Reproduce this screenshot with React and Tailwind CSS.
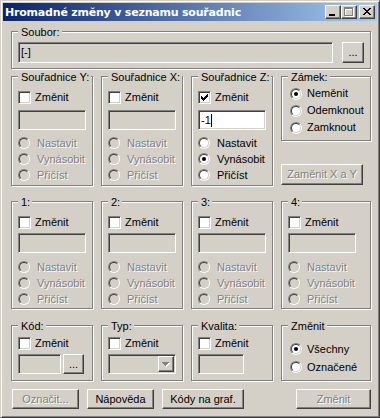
import React from "react";

const font = "font-['Liberation_Sans',Arial,sans-serif] text-[11px] leading-[13px]";
const sunken =
  "border border-t-[#808080] border-l-[#808080] border-r-white border-b-white shadow-[inset_1px_1px_0_#404040,inset_-1px_-1px_0_#d4d0c8]";
const raised =
  "border border-t-white border-l-white border-r-[#404040] border-b-[#404040] shadow-[inset_-1px_-1px_0_#808080] bg-[#d4d0c8]";
const dis = "text-[#808080] [text-shadow:1px_1px_0_#fff]";

function Group({ label, className = "", children }) {
  return (
    <div
      className={`relative border border-[#808080] shadow-[inset_1px_1px_0_#fff,1px_1px_0_#fff] ${className}`}
    >
      <span className="absolute left-[6px] -top-[6px] bg-[#d4d0c8] pl-[3px] pr-[2px] whitespace-nowrap">
        {label}
      </span>
      {children}
    </div>
  );
}

function Checkbox({ checked }) {
  return (
    <div className={`w-[13px] h-[13px] shrink-0 bg-white ${sunken} flex items-center justify-center`}>
      {checked && (
        <svg width="7" height="7" shapeRendering="crispEdges">
          <rect x="0" y="2" width="1" height="3" fill="#000" />
          <rect x="1" y="3" width="1" height="3" fill="#000" />
          <rect x="2" y="4" width="1" height="3" fill="#000" />
          <rect x="3" y="3" width="1" height="3" fill="#000" />
          <rect x="4" y="2" width="1" height="3" fill="#000" />
          <rect x="5" y="1" width="1" height="3" fill="#000" />
          <rect x="6" y="0" width="1" height="3" fill="#000" />
        </svg>
      )}
    </div>
  );
}

function Radio({ checked, disabled }) {
  return (
    <div className="w-[12px] h-[12px] shrink-0 rounded-full border border-t-[#808080] border-l-[#808080] border-b-white border-r-white">
      <div
        className={`w-full h-full rounded-full border border-t-[#404040] border-l-[#404040] border-b-[#d4d0c8] border-r-[#d4d0c8] flex items-center justify-center ${
          disabled ? "bg-[#d4d0c8]" : "bg-white"
        }`}
      >
        {checked && <div className="w-[4px] h-[4px] rounded-full bg-black" />}
      </div>
    </div>
  );
}

function CheckRow({ checked }) {
  return (
    <div className="flex items-center gap-[4px] h-[13px]">
      <Checkbox checked={checked} />
      <span>Změnit</span>
    </div>
  );
}

function Button({ children, disabled, className = "" }) {
  return (
    <div className={`${raised} flex items-center justify-center ${className}`}>
      <span className={disabled ? dis : "text-black"}>{children}</span>
    </div>
  );
}

function CoordGroup({ label, enabled, checked, value, selected, fieldMt, radioMt, className }) {
  const opts = ["Nastavit", "Vynásobit", "Přičíst"];
  return (
    <Group label={label} className={className}>
      <div className="flex flex-col pl-[6px] pt-[14px]">
        <CheckRow checked={checked} />
        <div
          className={`w-[68px] h-[20px] ${sunken} ${enabled ? "bg-white" : "bg-[#d4d0c8]"} flex items-center pl-[2px] ${fieldMt}`}
        >
          {value && (
            <>
              <span>{value}</span>
              <span className="w-[1px] h-[13px] bg-black" />
            </>
          )}
        </div>
        <div className={`flex flex-col ${radioMt}`}>
          {opts.map((o) => (
            <div key={o} className="flex items-center gap-[7px] h-[16px]">
              <Radio disabled={!enabled} checked={selected === o} />
              <span className={enabled ? "text-black" : dis}>{o}</span>
            </div>
          ))}
        </div>
      </div>
    </Group>
  );
}

function CaptionButton({ children }) {
  return (
    <div className={`w-[16px] h-[14px] ${raised} flex`}>
      <svg width="14" height="12" shapeRendering="crispEdges">
        {children}
      </svg>
    </div>
  );
}

export default function App() {
  return (
    <div
      className={`w-[380px] h-[418px] bg-[#d4d0c8] border border-t-[#d4d0c8] border-l-[#d4d0c8] border-r-[#404040] border-b-[#404040] shadow-[inset_1px_1px_0_#fff,inset_-1px_-1px_0_#808080] p-[2px] flex flex-col ${font} text-black`}
    >
      {/* Title bar */}
      <div className="h-[18px] shrink-0 flex items-center justify-between bg-[linear-gradient(to_right,#0a246a,#a6caf0)] pl-[2px] pr-[2px]">
        <span className="text-white font-bold whitespace-nowrap font-['DejaVu_Sans',sans-serif] text-[11px] tracking-[-0.2px]">
          Hromadné změny v seznamu souřadnic
        </span>
        <div className="flex items-center">
          <CaptionButton>
            <rect x="3" y="8" width="6" height="2" fill="#000" />
          </CaptionButton>
          <CaptionButton>
            <g fill="#fff">
              <rect x="3" y="2" width="9" height="2" />
              <rect x="3" y="2" width="1" height="9" />
              <rect x="11" y="2" width="1" height="9" />
              <rect x="3" y="10" width="9" height="1" />
            </g>
            <g fill="#808080">
              <rect x="2" y="1" width="9" height="2" />
              <rect x="2" y="1" width="1" height="9" />
              <rect x="10" y="1" width="1" height="9" />
              <rect x="2" y="9" width="9" height="1" />
            </g>
          </CaptionButton>
          <div className="w-[2px]" />
          <CaptionButton>
            <g fill="#000">
              <rect x="3" y="2" width="2" height="1" />
              <rect x="9" y="2" width="2" height="1" />
              <rect x="4" y="3" width="2" height="1" />
              <rect x="8" y="3" width="2" height="1" />
              <rect x="5" y="4" width="4" height="1" />
              <rect x="6" y="5" width="2" height="1" />
              <rect x="5" y="6" width="4" height="1" />
              <rect x="4" y="7" width="2" height="1" />
              <rect x="8" y="7" width="2" height="1" />
              <rect x="3" y="8" width="2" height="1" />
              <rect x="9" y="8" width="2" height="1" />
            </g>
          </CaptionButton>
        </div>
      </div>

      {/* Body */}
      <div className="pl-[8px] w-[368px] flex flex-col">
        {/* Soubor */}
        <Group label="Soubor:" className="mt-[10px] h-[38px] w-[360px]">
          <div className="flex pl-[6px] pt-[10px]">
            <div className={`w-[315px] h-[21px] ${sunken} bg-[#d4d0c8] flex items-center pl-[2px]`}>
              <span>[-]</span>
            </div>
            <Button className="ml-[9px] w-[22px] h-[21px]">...</Button>
          </div>
        </Group>

        {/* Row 1 */}
        <div className="mt-[7px] grid grid-cols-[82px_82px_82px_90px] gap-x-[8px] h-[110px]">
          <CoordGroup label="Souřadnice Y:" fieldMt="mt-[6px]" radioMt="mt-[5px]" />
          <CoordGroup label="Souřadnice X:" fieldMt="mt-[6px]" radioMt="mt-[5px]" />
          <CoordGroup
            label="Souřadnice Z:"
            enabled
            checked
            value="-1"
            selected="Vynásobit"
            fieldMt="mt-[6px]"
            radioMt="mt-[5px]"
          />
          <div className="flex flex-col">
            <Group label="Zámek:" className="h-[65px]">
              <div className="flex flex-col pl-[8px] pt-[8px]">
                {["Neměnit", "Odemknout", "Zamknout"].map((o, i) => (
                  <div key={o} className="flex items-center gap-[5px] h-[17px]">
                    <Radio checked={i === 0} />
                    <span>{o}</span>
                  </div>
                ))}
              </div>
            </Group>
            <Button disabled className="mt-auto mb-[1px] w-[82px] h-[21px]">
              Zaměnit X a Y
            </Button>
          </div>
        </div>

        {/* Row 2 */}
        <div className="mt-[15px] grid grid-cols-[82px_82px_82px_90px] gap-x-[8px] h-[108px]">
          <CoordGroup label="1:" fieldMt="mt-[4px]" radioMt="mt-[6px]" />
          <CoordGroup label="2:" fieldMt="mt-[4px]" radioMt="mt-[6px]" />
          <CoordGroup label="3:" fieldMt="mt-[4px]" radioMt="mt-[6px]" />
          <CoordGroup label="4:" fieldMt="mt-[4px]" radioMt="mt-[6px]" />
        </div>

        {/* Row 3 */}
        <div className="mt-[16px] grid grid-cols-[82px_82px_82px_90px] gap-x-[8px] h-[56px]">
          <Group label="Kód:">
            <div className="flex flex-col pl-[6px] pt-[11px]">
              <CheckRow />
              <div className="flex mt-[4px]">
                <div className={`w-[43px] h-[20px] ${sunken} bg-[#d4d0c8]`} />
                <Button className="ml-[2px] w-[21px] h-[20px]">...</Button>
              </div>
            </div>
          </Group>
          <Group label="Typ:">
            <div className="flex flex-col pl-[6px] pt-[11px]">
              <CheckRow />
              <div className={`mt-[4px] w-[68px] h-[20px] ${sunken} bg-[#d4d0c8] flex justify-end p-[1px]`}>
                <div className={`w-[16px] h-full ${raised} flex items-center justify-center`}>
                  <svg width="8" height="5" shapeRendering="crispEdges">
                    <g fill="#fff">
                      <rect x="1" y="1" width="7" height="1" />
                      <rect x="2" y="2" width="5" height="1" />
                      <rect x="3" y="3" width="3" height="1" />
                      <rect x="4" y="4" width="1" height="1" />
                    </g>
                    <g fill="#808080">
                      <rect x="0" y="0" width="7" height="1" />
                      <rect x="1" y="1" width="5" height="1" />
                      <rect x="2" y="2" width="3" height="1" />
                      <rect x="3" y="3" width="1" height="1" />
                    </g>
                  </svg>
                </div>
              </div>
            </div>
          </Group>
          <Group label="Kvalita:">
            <div className="flex flex-col pl-[6px] pt-[11px]">
              <CheckRow />
              <div className={`mt-[4px] w-[46px] h-[20px] ${sunken} bg-[#d4d0c8]`} />
            </div>
          </Group>
          <Group label="Změnit">
            <div className="flex flex-col pl-[8px] pt-[14px]">
              {["Všechny", "Označené"].map((o, i) => (
                <div key={o} className="flex items-center gap-[5px] h-[18px]">
                  <Radio checked={i === 0} />
                  <span>{o}</span>
                </div>
              ))}
            </div>
          </Group>
        </div>

        {/* Bottom buttons */}
        <div className="mt-[8px] flex justify-between w-[360px]">
          <div className="flex gap-[8px] pl-[1px]">
            <Button disabled className="w-[67px] h-[20px]">Označit...</Button>
            <Button className="w-[67px] h-[20px]">Nápověda</Button>
            <Button className="w-[82px] h-[20px]">Kódy na graf.</Button>
          </div>
          <Button disabled className="w-[75px] h-[20px]">Změnit</Button>
        </div>
      </div>
    </div>
  );
}
